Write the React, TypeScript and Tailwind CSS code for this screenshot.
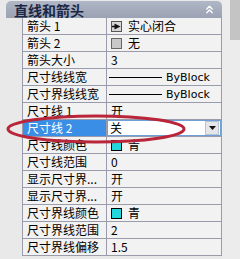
import { ChevronsUp } from "lucide-react";

type Row = { label: string; value: string; kind?: "arrow" | "none" | "line" | "color" | "select" };

const rows: Row[] = [
  { label: "箭头 1", value: "实心闭合", kind: "arrow" },
  { label: "箭头 2", value: "无", kind: "none" },
  { label: "箭头大小", value: "3" },
  { label: "尺寸线线宽", value: "ByBlock", kind: "line" },
  { label: "尺寸界线线宽", value: "ByBlock", kind: "line" },
  { label: "尺寸线 1", value: "开" },
  { label: "尺寸线 2", value: "关", kind: "select" },
  { label: "尺寸线颜色", value: "青", kind: "color" },
  { label: "尺寸线范围", value: "0" },
  { label: "显示尺寸界...", value: "开" },
  { label: "显示尺寸界...", value: "开" },
  { label: "尺寸界线颜色", value: "青", kind: "color" },
  { label: "尺寸界线范围", value: "2" },
  { label: "尺寸界线偏移", value: "1.5" },
];

function Value({ row }: { row: Row }) {
  if (row.kind === "arrow")
    return (
      <div className="flex items-center gap-[6px] pl-[2px]">
        <span className="flex h-[11px] w-[11px] items-center justify-center border border-[#555] bg-[#d8d8d8]">
          <svg width="9" height="7" viewBox="0 0 9 7">
            <path d="M0 3.5h3" stroke="#111" strokeWidth="1.5" />
            <path d="M2.5 0.5L8.5 3.5L2.5 6.5Z" fill="#111" />
          </svg>
        </span>
        <span>{row.value}</span>
      </div>
    );
  if (row.kind === "none")
    return (
      <div className="flex items-center gap-[6px] pl-[2px]">
        <span className="h-[11px] w-[11px] border border-[#666] bg-[#c8c8c8]" />
        <span>{row.value}</span>
      </div>
    );
  if (row.kind === "line")
    return (
      <div className="flex items-center">
        <span className="h-px w-[53px] bg-black" />
        <span className="ml-[4px] font-['DejaVu_Sans',sans-serif] text-[11px]">{row.value}</span>
      </div>
    );
  if (row.kind === "color")
    return (
      <div className="flex items-center gap-[6px] pl-[2px]">
        <span className="h-[11px] w-[11px] border border-black bg-[#22d6dc]" />
        <span>{row.value}</span>
      </div>
    );
  return <span className="pl-[2px]">{row.value}</span>;
}

export default function App() {
  return (
    <div className="flex h-[259px] w-[240px] overflow-hidden bg-[#e9e9e9] font-['Noto_Sans_CJK_SC','Liberation_Sans',sans-serif] text-[12px] leading-none text-black">
      <div className="relative flex w-[222px] flex-col">
        <div className="ml-[6px] mt-[1px] flex h-[17px] items-center justify-between rounded-t-[5px] bg-gradient-to-b from-[#b0b7c6] to-[#9aa2b3] pl-[8px] pr-[6px]">
          <span className="text-[14px] font-bold leading-[16px] text-[#1b2745]">直线和箭头</span>
          <ChevronsUp size={13} strokeWidth={2.5} color="#ffffff" />
        </div>
        <div className="ml-[22px] flex flex-col border-l border-r border-[#9a9cab] bg-[#f2f2f2]">
          {rows.map((row, i) => {
            const selected = row.kind === "select";
            return (
              <div key={i} className="flex h-[17px] border-b border-[#9a9cab]">
                <div
                  className={`flex w-[84px] items-center border-r border-[#9a9cab] pl-[4px] ${
                    selected ? "bg-[#3a8ee6] text-white" : ""
                  }`}
                >
                  {row.label}
                </div>
                {selected ? (
                  <div className="flex flex-1 items-center justify-between border border-[#6d9fd8] bg-white pl-[2px] pr-px">
                    <span>{row.value}</span>
                    <span className="flex h-[14px] w-[14px] items-center justify-center border border-[#b9c3d2] bg-[#e4e6ea]">
                      <svg width="7" height="4" viewBox="0 0 7 4">
                        <path d="M0 0H7L3.5 4Z" fill="#111" />
                      </svg>
                    </span>
                  </div>
                ) : (
                  <div className="flex flex-1 items-center pl-[2px]">
                    <Value row={row} />
                  </div>
                )}
              </div>
            );
          })}
        </div>
        <svg className="pointer-events-none absolute left-0 top-0" width="222" height="259">
          <ellipse cx="96" cy="129" rx="88" ry="13" fill="none" stroke="#b9263a" strokeWidth="3" />
        </svg>
      </div>
      <div className="flex w-[18px] flex-col items-center bg-[#ececec]">
        <div className="ml-[8px] h-[40px] w-[10px] bg-[#c4c4c4]" />
      </div>
    </div>
  );
}
